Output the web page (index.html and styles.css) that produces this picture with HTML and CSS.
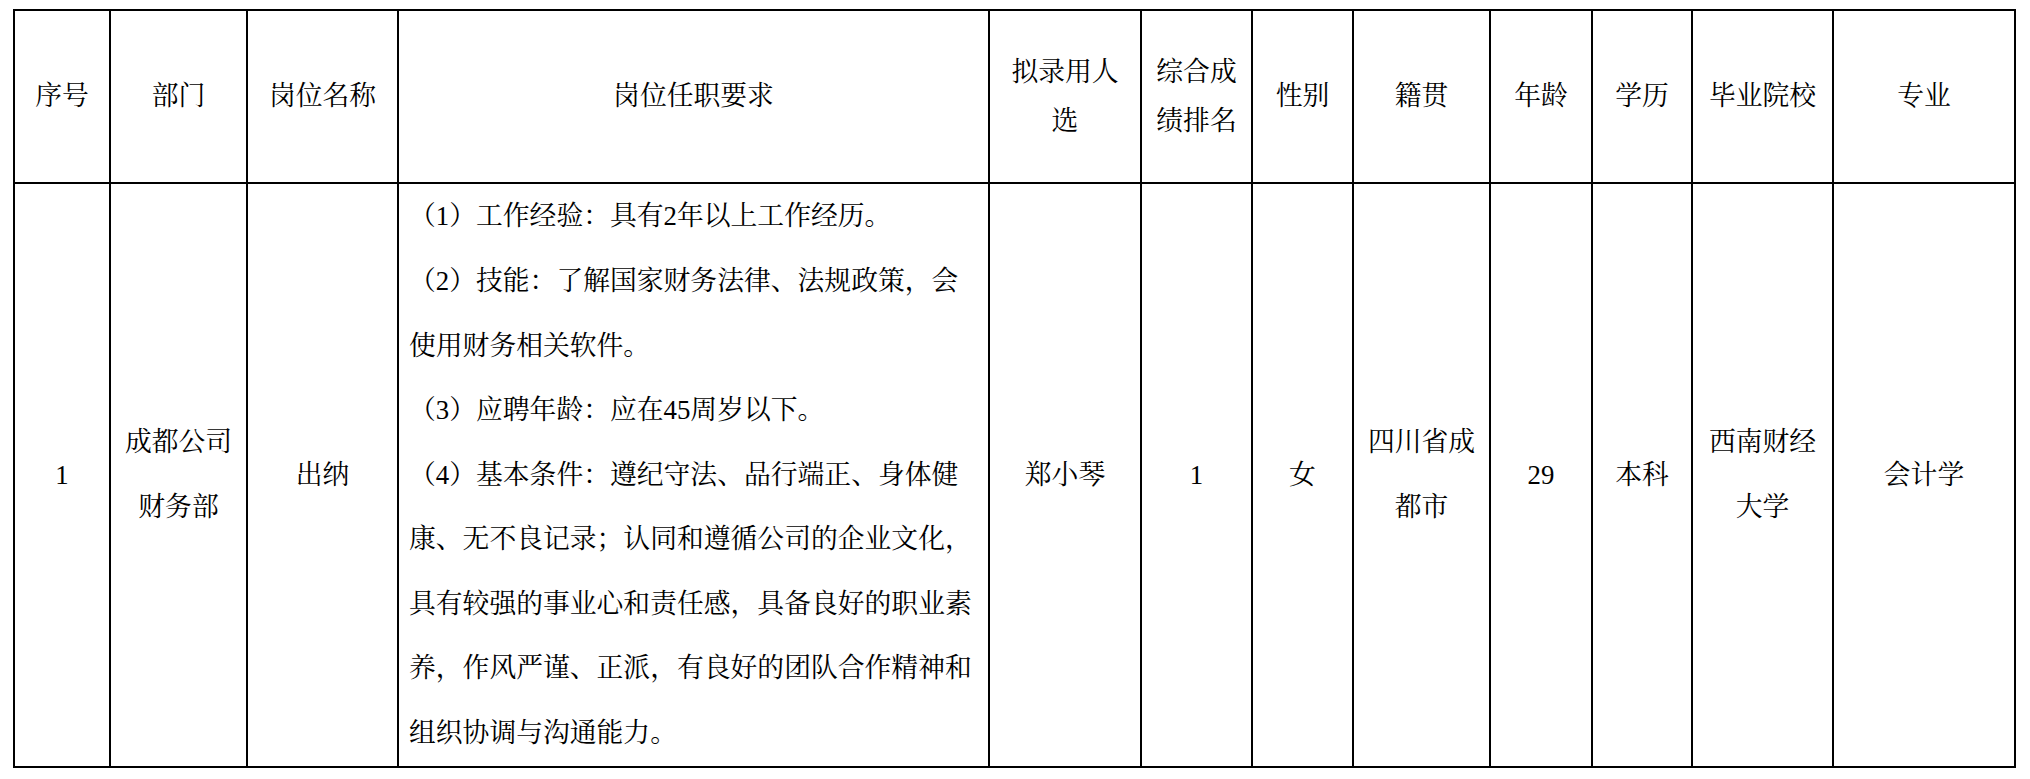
FILE: index.html
```html
<!DOCTYPE html>
<html lang="zh-CN">
<head>
<meta charset="utf-8">
<title>拟录用人员公示</title>
<link rel="stylesheet" href="styles.css">
</head>
<body>
<div class="sheet">
  <div class="cell head">序号</div>
  <div class="cell head">部门</div>
  <div class="cell head">岗位名称</div>
  <div class="cell head">岗位任职要求</div>
  <div class="cell head">拟录用人<br>选</div>
  <div class="cell head">综合成<br>绩排名</div>
  <div class="cell head">性别</div>
  <div class="cell head">籍贯</div>
  <div class="cell head">年龄</div>
  <div class="cell head">学历</div>
  <div class="cell head">毕业院校</div>
  <div class="cell head">专业</div>

  <div class="cell body">1</div>
  <div class="cell body">成都公司<br>财务部</div>
  <div class="cell body">出纳</div>
  <div class="cell body req">
    <p>（1）工作经验：具有2年以上工作经历。</p>
    <p>（2）技能：了解国家财务法律、法规政策，会使用财务相关软件。</p>
    <p>（3）应聘年龄：应在45周岁以下。</p>
    <p>（4）基本条件：遵纪守法、品行端正、身体健康、无不良记录；认同和遵循公司的企业文化，具有较强的事业心和责任感，具备良好的职业素养，作风严谨、正派，有良好的团队合作精神和组织协调与沟通能力。</p>
  </div>
  <div class="cell body">郑小琴</div>
  <div class="cell body">1</div>
  <div class="cell body">女</div>
  <div class="cell body">四川省成<br>都市</div>
  <div class="cell body">29</div>
  <div class="cell body">本科</div>
  <div class="cell body">西南财经<br>大学</div>
  <div class="cell body">会计学</div>
</div>
</body>
</html>
```

FILE: styles.css
```css
html, body {
  margin: 0;
  padding: 0;
  background: #ffffff;
}

body {
  padding: 9px 0 0 13px;
  font-family: "Liberation Serif", "Noto Serif CJK SC", "Noto Sans CJK SC", serif;
  font-size: 26.8px;
  color: #000000;
}

.sheet {
  display: grid;
  width: max-content;
  grid-template-columns: 96px 137px 151px 591px 152px 111px 101px 137px 102px 100px 141px 182px;
  grid-template-rows: 173px 584px;
  border-left: 2px solid #000;
  border-top: 2px solid #000;
}

.cell {
  box-sizing: border-box;
  border-right: 2px solid #000;
  border-bottom: 2px solid #000;
  display: flex;
  flex-direction: column;
  align-items: center;
  justify-content: center;
  text-align: center;
  overflow: visible;
}

.head {
  line-height: 49px;
}

.body {
  line-height: 65px;
}

.req {
  align-items: stretch;
  text-align: left;
  padding: 0 12px 0 10px;
  line-height: 64.6px;
}

.req p {
  margin: 0;
}
```
